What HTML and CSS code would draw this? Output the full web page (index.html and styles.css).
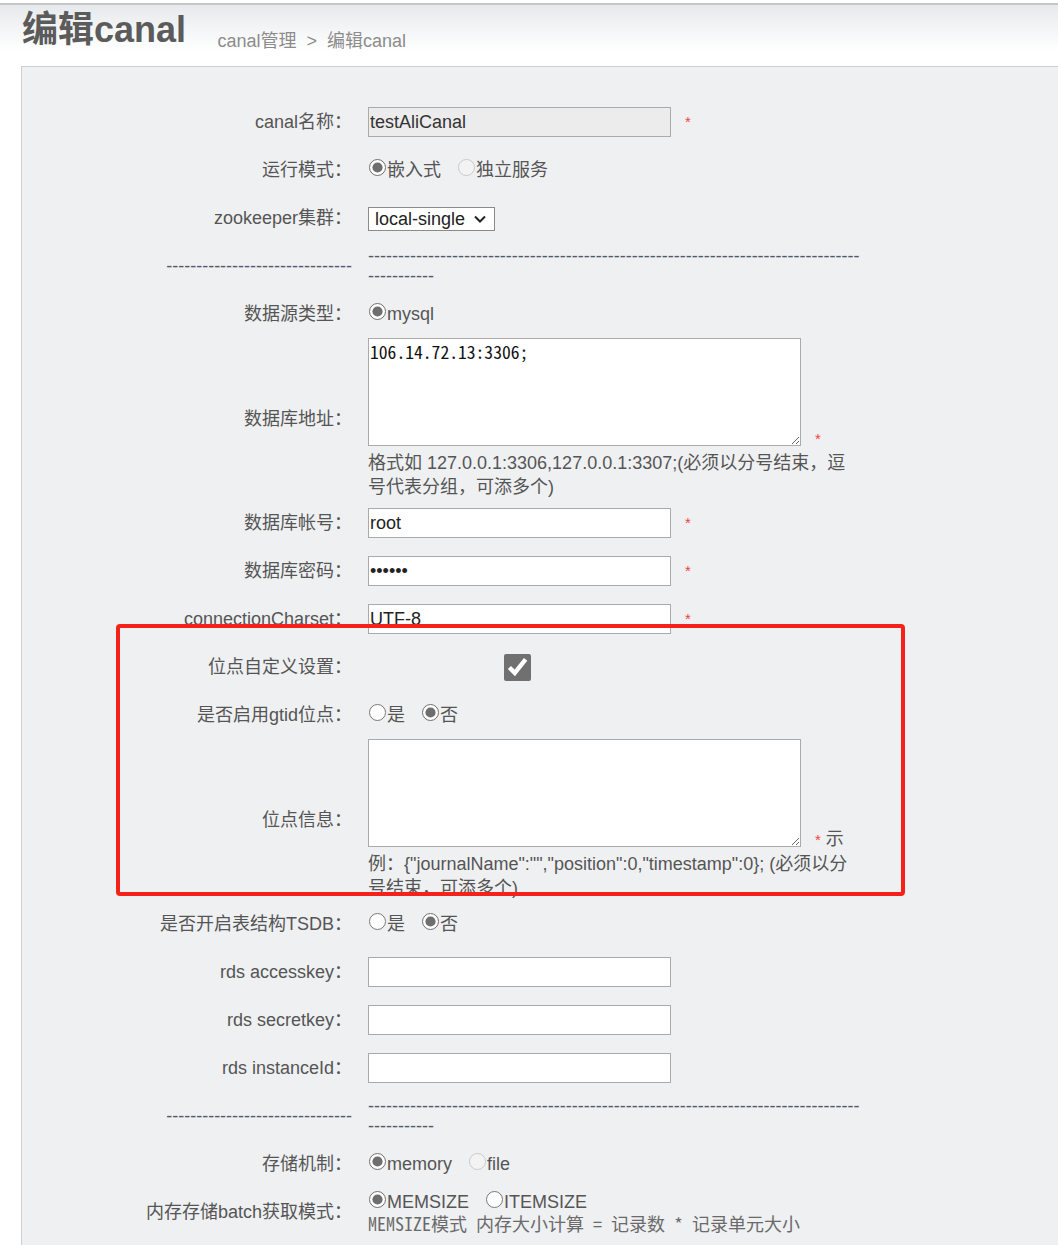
FILE: index.html
```html
<!DOCTYPE html>
<html lang="zh-CN">
<head>
<meta charset="UTF-8">
<meta name="viewport" content="width=device-width, initial-scale=1.0">
<title>编辑canal</title>
<link rel="stylesheet" href="styles.css">
</head>
<body>

<!-- HEADER -->
<div class="page-head">
  <h1>编辑canal</h1>
  <span class="crumb">canal管理 <span class="crumb-sep">&gt;</span> 编辑canal</span>
</div>

<!-- FORM PANEL -->
<div class="panel">
  <form class="canal-form" onsubmit="return false">
  <table class="form-table">
    <tr>
      <td class="label">canal名称：</td>
      <td class="value"><input class="text readonly" type="text" value="testAliCanal" readonly><span class="req">*</span></td>
    </tr>
    <tr>
      <td class="label">运行模式：</td>
      <td class="value">
        <label class="opt"><input type="radio" name="runMode" checked>嵌入式</label>
        <label class="opt"><input type="radio" name="runMode" disabled>独立服务</label>
      </td>
    </tr>
    <tr>
      <td class="label">zookeeper集群：</td>
      <td class="value">
        <select class="zk-select">
          <option>local-single</option>
        </select>
      </td>
    </tr>
    <tr class="sep-row">
      <td class="label">-------------------------------</td>
      <td class="value">---------------------------------------------------------------------------------------------</td>
    </tr>
    <tr>
      <td class="label">数据源类型：</td>
      <td class="value"><label class="opt"><input type="radio" name="sourceType" checked>mysql</label></td>
    </tr>
    <tr class="tall">
      <td class="label">数据库地址：</td>
      <td class="value">
        <textarea class="area">106.14.72.13:3306;</textarea><span class="req">*</span>
        <div class="hint">格式如 127.0.0.1:3306,127.0.0.1:3307;(必须以分号结束，逗号代表分组，可添多个)</div>
      </td>
    </tr>
    <tr>
      <td class="label">数据库帐号：</td>
      <td class="value"><input class="text" type="text" value="root"><span class="req">*</span></td>
    </tr>
    <tr>
      <td class="label">数据库密码：</td>
      <td class="value"><input class="text" type="password" value="123456"><span class="req">*</span></td>
    </tr>
    <tr>
      <td class="label">connectionCharset：</td>
      <td class="value"><input class="text" type="text" value="UTF-8"><span class="req">*</span></td>
    </tr>
    <tr>
      <td class="label">位点自定义设置：</td>
      <td class="value"><input class="check" type="checkbox" checked></td>
    </tr>
    <tr>
      <td class="label">是否启用gtid位点：</td>
      <td class="value">
        <label class="opt"><input type="radio" name="gtid">是</label>
        <label class="opt"><input type="radio" name="gtid" checked>否</label>
      </td>
    </tr>
    <tr class="tall">
      <td class="label">位点信息：</td>
      <td class="value"><textarea class="area"></textarea><span class="req">*</span> 示例：{"journalName":"","position":0,"timestamp":0}; (必须以分号结束，可添多个)</td>
    </tr>
    <tr>
      <td class="label">是否开启表结构TSDB：</td>
      <td class="value">
        <label class="opt"><input type="radio" name="tsdb">是</label>
        <label class="opt"><input type="radio" name="tsdb" checked>否</label>
      </td>
    </tr>
    <tr>
      <td class="label">rds accesskey：</td>
      <td class="value"><input class="text" type="text"></td>
    </tr>
    <tr>
      <td class="label">rds secretkey：</td>
      <td class="value"><input class="text" type="text"></td>
    </tr>
    <tr>
      <td class="label">rds instanceId：</td>
      <td class="value"><input class="text" type="text"></td>
    </tr>
    <tr class="sep-row">
      <td class="label">-------------------------------</td>
      <td class="value">---------------------------------------------------------------------------------------------</td>
    </tr>
    <tr>
      <td class="label">存储机制：</td>
      <td class="value">
        <label class="opt"><input type="radio" name="storage" checked>memory</label>
        <label class="opt"><input type="radio" name="storage" disabled>file</label>
      </td>
    </tr>
    <tr class="batch-row">
      <td class="label">内存存储batch获取模式：</td>
      <td class="value">
        <label class="opt"><input type="radio" name="batchMode" checked>MEMSIZE</label>
        <label class="opt"><input type="radio" name="batchMode">ITEMSIZE</label>
        <div class="mono-hint">MEMSIZE模式 内存大小计算 = 记录数 * 记录单元大小</div>
      </td>
    </tr>
  </table>
  </form>
</div>

<!-- ANNOTATION -->
<div class="mark-box"></div>

</body>
</html>
```

FILE: styles.css
```css
  body {
    margin: 0;
    background: #fff;
    font-family: "Liberation Sans", "Noto Sans CJK SC", sans-serif;
    color: #555;
  }

  /* header strip */
  .page-head {
    margin-top: 3px;
    border-top: 2px solid #c6c6c6;
    height: 63px;
    box-sizing: border-box;
    padding: 3px 0 0 22px;
    background: linear-gradient(#e7e9ec, #fff 75%);
    white-space: nowrap;
  }
  .page-head h1 { display: inline; margin: 0; font-size: 36px; line-height: 44px; font-weight: bold; color: #5b5b5b; }
  .crumb { margin-left: 27px; font-size: 18px; color: #8c8c8c; vertical-align: -5px; }
  .crumb-sep { margin: 0 5px; }

  /* panel */
  .panel {
    margin-left: 21px;
    border-top: 1px solid #cfcfcf;
    border-left: 1px solid #cfcfcf;
    background: #eff0f2;
    padding: 31px 0 24px;
  }
  .canal-form { margin: 0; }

  .form-table { border-collapse: collapse; font-size: 18px; line-height: 24px; }
  .form-table tr { height: 48px; }
  .form-table td { padding: 0; vertical-align: middle; }
  .form-table .label { width: 330px; text-align: right; white-space: nowrap; }
  .form-table .value { width: 492px; padding-left: 16px; }

  .sep-row td { line-height: 20px; color: #505965; }
  .sep-row .value { word-break: break-all; }

  .text {
    box-sizing: border-box;
    width: 303px;
    height: 30px;
    margin: 0;
    padding: 0 1px;
    border: 1px solid #aaa;
    background: #fff;
    font: 18px "Liberation Sans", "Noto Sans CJK SC", sans-serif;
    color: #222;
    vertical-align: middle;
  }
  .text.readonly { background: #ececec; color: #333; }

  .req { margin-left: 14px; font-size: 15px; color: #f4433a; }

  .zk-select {
    -webkit-appearance: none;
    appearance: none;
    box-sizing: border-box;
    width: 127px;
    height: 24px;
    margin: 0;
    padding: 0 0 0 6px;
    font: 18px "Liberation Sans", sans-serif;
    color: #222;
    border: 1px solid #8a8a8a;
    border-radius: 0;
    background: #fff url("data:image/svg+xml,%3Csvg xmlns='http://www.w3.org/2000/svg' width='12' height='8' viewBox='0 0 12 8'%3E%3Cpath d='M1 1.5l5 5 5-5' fill='none' stroke='%23222' stroke-width='2'/%3E%3C/svg%3E") no-repeat right 8px center;
    vertical-align: middle;
  }

  .area {
    box-sizing: border-box;
    width: 433px;
    height: 108px;
    margin: 0;
    padding: 3px 1px;
    border: 1px solid #aaa;
    background: #fff;
    font: 17.6px/20px "Noto Sans Mono CJK SC", "Liberation Mono", monospace;
    color: #111;
    vertical-align: -2px;
  }

  .opt { margin-right: 11px; }
  .opt input {
    width: 17px;
    height: 17px;
    margin: 0 1px 0 1px;
    accent-color: #6e6e6e;
    vertical-align: baseline;
  }

  .check { width: 27px; height: 27px; margin: 0 0 0 136px; accent-color: #707070; vertical-align: middle; }

  .batch-row td.value { line-height: 22px; }
  .mono-hint { font: 18px/20px "Noto Sans Mono CJK SC", "Liberation Mono", monospace; color: #6a6a6a; }

  /* red highlight drawn over the form */
  .mark-box {
    position: absolute;
    left: 116px;
    top: 624px;
    width: 789px;
    height: 272px;
    box-sizing: border-box;
    border: 4px solid #f5221b;
    border-radius: 4px;
  }
```
